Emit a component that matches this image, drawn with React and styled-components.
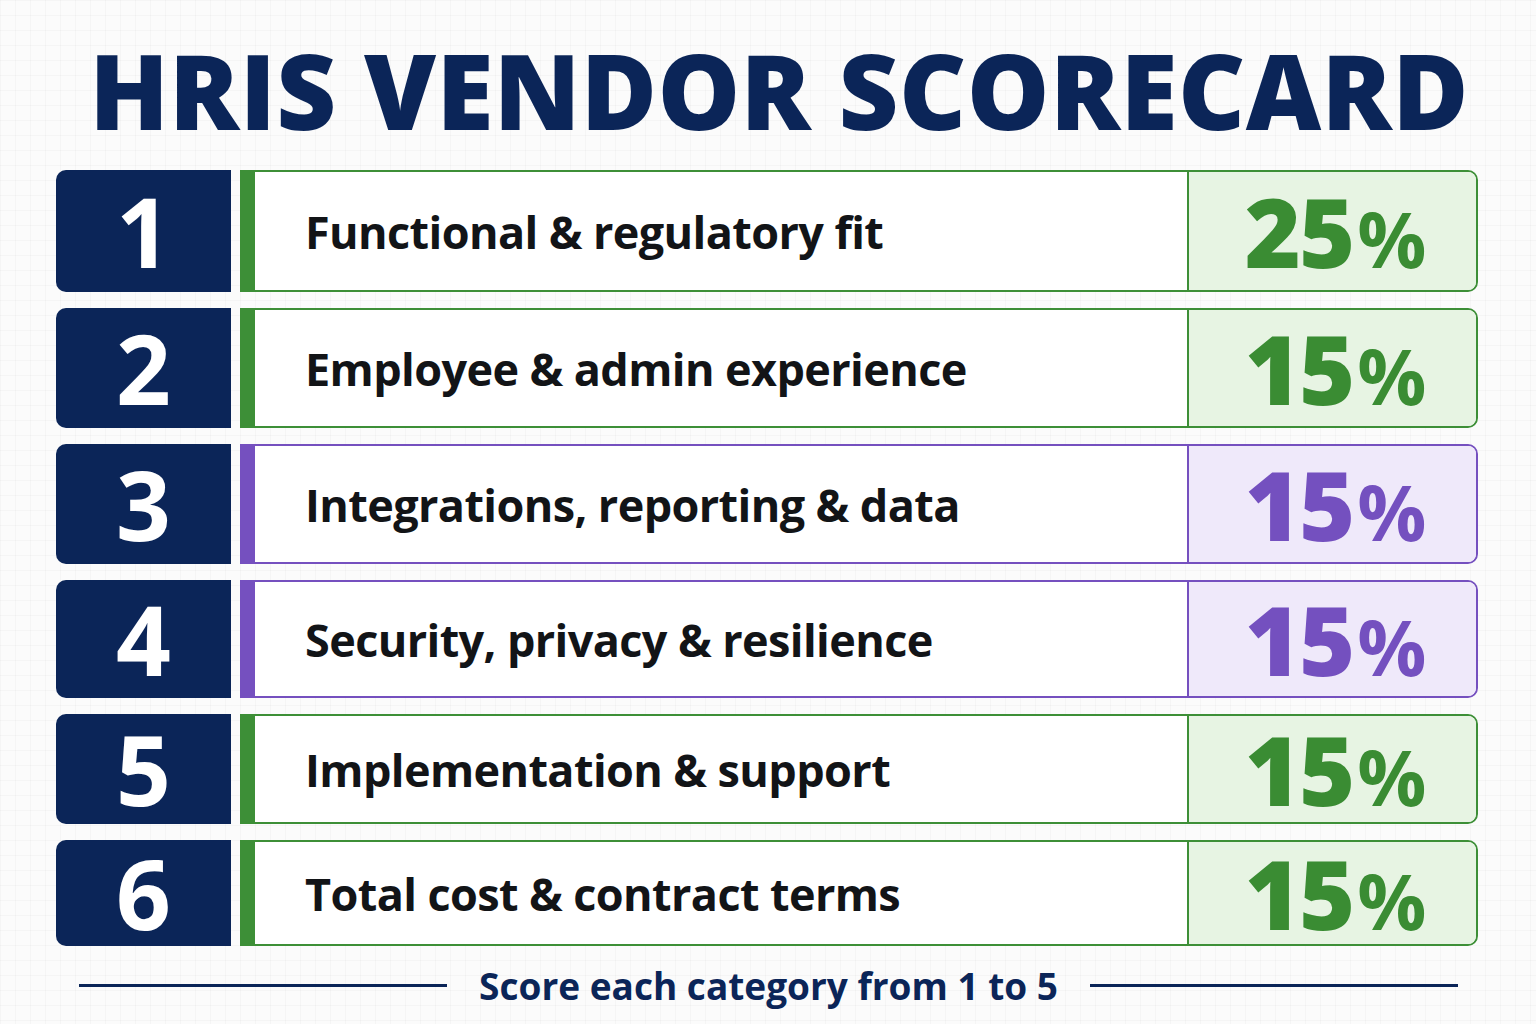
import React from 'react';
import styled, { createGlobalStyle } from 'styled-components';

const GlobalStyle = createGlobalStyle`
  html, body {
    margin: 0;
    padding: 0;
  }
  body {
    background-color: #fbfbfb;
    background-image:
      linear-gradient(rgba(0, 0, 0, 0.025) 1px, transparent 1px),
      linear-gradient(90deg, rgba(0, 0, 0, 0.025) 1px, transparent 1px);
    background-size: 15px 15px;
    font-family: 'Open Sans', 'Liberation Sans', sans-serif;
  }
`;

const NAVY = '#0b2558';

const colors = {
  green: { line: '#3d8f37', tint: '#e7f4e3', text: '#3a8c33' },
  purple: { line: '#7550bf', tint: '#efe9fa', text: '#7450bf' },
};

const rows = [
  { n: 1, label: 'Functional & regulatory fit', pct: 25, tone: 'green', h: 122 },
  { n: 2, label: 'Employee & admin experience', pct: 15, tone: 'green', h: 120 },
  { n: 3, label: 'Integrations, reporting & data', pct: 15, tone: 'purple', h: 120 },
  { n: 4, label: 'Security, privacy & resilience', pct: 15, tone: 'purple', h: 118 },
  { n: 5, label: 'Implementation & support', pct: 15, tone: 'green', h: 110 },
  { n: 6, label: 'Total cost & contract terms', pct: 15, tone: 'green', h: 106 },
];

const App = () => {
  return (
    <>
      <GlobalStyle />
      <Page>
        <Title>HRIS VENDOR SCORECARD</Title>
        <List>
          {rows.map((r) => (
            <Row key={r.n} $h={r.h}>
              <NumBox>{r.n}</NumBox>
              <Card $tone={r.tone}>
                <Label>{r.label}</Label>
                <Pct $tone={r.tone}>
                  {r.pct}
                  <PctSign>%</PctSign>
                </Pct>
              </Card>
            </Row>
          ))}
        </List>
        <Footer>
          <Rule />
          <FooterText>Score each category from 1 to 5</FooterText>
          <Rule />
        </Footer>
      </Page>
    </>
  );
};

export default App;

const Page = styled.div`
  width: 1536px;
  height: 1024px;
  box-sizing: border-box;
  padding: 28px 58px 0 56px;
  display: flex;
  flex-direction: column;
`;

const Title = styled.h1`
  margin: 0 0 18px 0;
  padding-left: 24px;
  text-align: center;
  font-family: 'Open Sans', sans-serif;
  font-weight: 800;
  font-size: 104px;
  line-height: 124px;
  letter-spacing: 0.3px;
  color: ${NAVY};
`;

const List = styled.div`
  display: flex;
  flex-direction: column;
  gap: 16px;
`;

const Row = styled.div`
  height: ${(p) => p.$h}px;
  display: grid;
  grid-template-columns: 175px 1fr;
  column-gap: 9px;
`;

const NumBox = styled.div`
  background: ${NAVY};
  border-radius: 10px 0 0 10px;
  color: #fff;
  display: flex;
  align-items: center;
  justify-content: center;
  font-family: 'Open Sans', sans-serif;
  font-weight: 700;
  font-size: 96px;
  line-height: 1;
`;

const Card = styled.div`
  display: flex;
  background: #fff;
  border: 2px solid ${(p) => colors[p.$tone].line};
  border-left: 15px solid ${(p) => colors[p.$tone].line};
  border-radius: 0 10px 10px 0;
`;

const Label = styled.div`
  flex: 1;
  display: flex;
  align-items: center;
  padding-left: 50px;
  font-family: 'Open Sans', sans-serif;
  font-weight: 700;
  font-size: 45px;
  letter-spacing: -0.6px;
  color: #121417;
`;

const Pct = styled.div`
  width: 289px;
  border-left: 2px solid ${(p) => colors[p.$tone].line};
  border-radius: 0 8px 8px 0;
  background: ${(p) => colors[p.$tone].tint};
  color: ${(p) => colors[p.$tone].text};
  display: flex;
  flex-wrap: wrap;
  align-content: center;
  align-items: baseline;
  justify-content: center;
  padding-left: 6px;
  box-sizing: border-box;
  font-family: 'Open Sans', sans-serif;
  font-weight: 800;
  font-size: 96px;
  line-height: 1;
  letter-spacing: -2px;
`;

const PctSign = styled.span`
  font-size: 0.8em;
  font-weight: 700;
  margin-left: 4px;
  letter-spacing: 0;
`;

const Footer = styled.div`
  display: flex;
  align-items: center;
  gap: 32px;
  margin-top: 14px;
  padding: 0 20px 0 23px;
`;

const Rule = styled.div`
  flex: 1;
  height: 3px;
  background: ${NAVY};
`;

const FooterText = styled.div`
  font-family: 'Open Sans', sans-serif;
  font-weight: 700;
  font-size: 37px;
  color: ${NAVY};
`;
